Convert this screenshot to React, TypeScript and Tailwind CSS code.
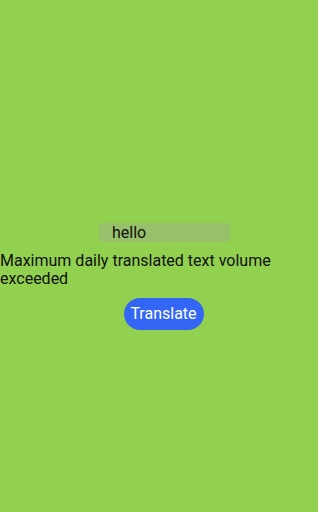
export default function App() {
	return (
		<main
			className="w-[318px] h-[512px] bg-[#92d050] flex flex-col items-center pt-[223px] text-[16px] text-[#111]"
			style={{ fontFamily: "Roboto, 'Liberation Sans', sans-serif" }}
		>
			<div className="ml-[11px] w-[131px] h-[19px] rounded-[4px] bg-[#98bf6b] pl-[13px] flex items-center leading-none">
				hello
			</div>
			<p className="self-stretch mt-[10px] leading-[18px]">
				Maximum daily translated text volume exceeded
			</p>
			<button className="ml-[9px] mt-[10px] w-[80px] h-[32px] rounded-full bg-[#3366f5] text-white leading-none">
				Translate
			</button>
		</main>
	);
}
